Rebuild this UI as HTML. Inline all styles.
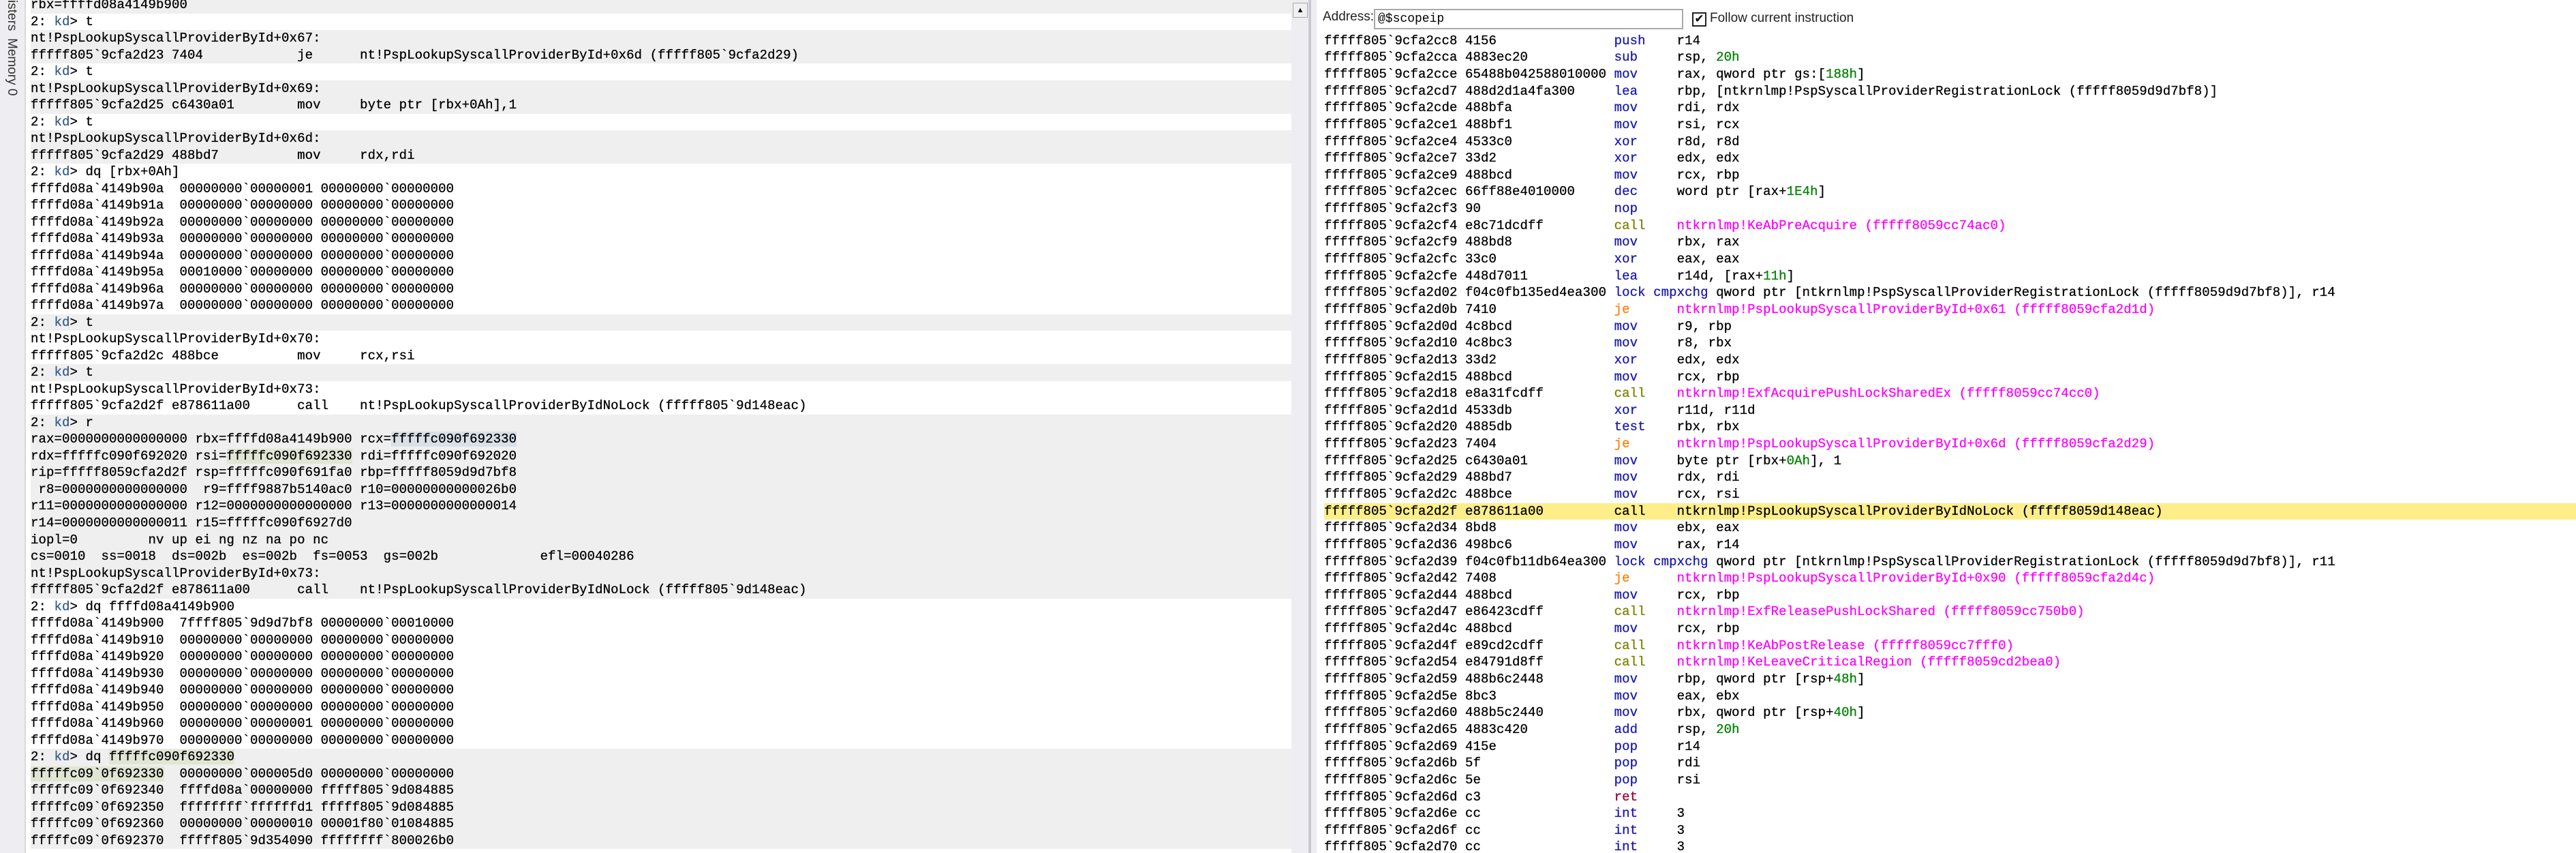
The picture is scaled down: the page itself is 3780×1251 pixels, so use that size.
<!DOCTYPE html>
<html><head><meta charset="utf-8">
<style>
html,body{margin:0;padding:0;width:3780px;height:1251px;overflow:hidden;background:#fff;}
body{position:relative;font-family:"Liberation Mono",monospace;}
#strip{position:absolute;left:0;top:0;width:36px;height:1251px;background:#eeeef2;border-right:2px solid #d8d8de;}
.vt{position:absolute;left:6px;writing-mode:vertical-rl;font-family:"Liberation Sans",sans-serif;font-size:19px;color:#333;}
#left{position:absolute;left:45px;top:-5px;width:1850px;}
.l{height:24.53px;line-height:24.53px;font-size:19px;letter-spacing:0.1px;white-space:pre;color:#000;-webkit-text-stroke:0.3px #000;}
.g{background:#efefef;}
.k{color:#3a5f8a;-webkit-text-stroke:0.3px #3a5f8a;}
.hb{background:#d9e0e8;}
.hg{background:#e1e5d4;}
#sep{position:absolute;left:1895px;top:0;width:25px;height:1251px;background:#eeeef2;}
#sep2{position:absolute;left:1920px;top:0;width:4px;height:1251px;background:#c9c9d2;}
#sep3{position:absolute;left:1924px;top:0;width:8px;height:1251px;background:#eeeef2;}
#sbtn{position:absolute;left:1897px;top:4px;width:20px;height:20px;border:1px solid #a8a8a8;background:#f0f0f0;font-size:11px;line-height:20px;text-align:center;font-family:"Liberation Sans",sans-serif;}
#addr{position:absolute;left:1941px;top:14px;font-family:"Liberation Sans",sans-serif;font-size:19px;color:#222;}
#box{position:absolute;left:2016px;top:13px;width:446px;height:26px;border:2px solid #a9a9a9;font-family:"Liberation Mono",monospace;font-size:18px;line-height:26px;padding-left:4px;box-sizing:content-box;}
#cb{position:absolute;left:2483px;top:18px;width:17px;height:17px;border:2px solid #222;font-size:17px;line-height:17px;text-align:center;font-family:"DejaVu Sans",sans-serif;}
#fl{position:absolute;left:2509px;top:16px;font-family:"Liberation Sans",sans-serif;font-size:19px;color:#222;}
#right{position:absolute;left:1943px;top:47.7px;width:1837px;}
.r{height:24.65px;line-height:24.65px;font-size:19px;letter-spacing:0.1px;white-space:pre;color:#000;-webkit-text-stroke:0.3px currentColor;}
.r span{-webkit-text-stroke:0.3px currentColor;}
.m{color:#1a1ab0;}
.j{color:#ff7f00;}
.c{color:#808000;}
.s{color:#ff00ff;}
.n{color:#008000;}
.rt{color:#a00030;}
.y{background:#fdee8a;}
</style></head><body>
<div id="strip"><div class="vt" style="top:0">isters</div><div class="vt" style="top:56px">Memory 0</div></div>
<div id="left">
<div class="l g">rbx=ffffd08a4149b900</div>
<div class="l">2: <span class="k">kd</span>&gt; t</div>
<div class="l g">nt!PspLookupSyscallProviderById+0x67:</div>
<div class="l g">fffff805`9cfa2d23 7404            je      nt!PspLookupSyscallProviderById+0x6d (fffff805`9cfa2d29)</div>
<div class="l">2: <span class="k">kd</span>&gt; t</div>
<div class="l g">nt!PspLookupSyscallProviderById+0x69:</div>
<div class="l g">fffff805`9cfa2d25 c6430a01        mov     byte ptr [rbx+0Ah],1</div>
<div class="l">2: <span class="k">kd</span>&gt; t</div>
<div class="l g">nt!PspLookupSyscallProviderById+0x6d:</div>
<div class="l g">fffff805`9cfa2d29 488bd7          mov     rdx,rdi</div>
<div class="l">2: <span class="k">kd</span>&gt; dq [rbx+0Ah]</div>
<div class="l">ffffd08a`4149b90a  00000000`00000001 00000000`00000000</div>
<div class="l">ffffd08a`4149b91a  00000000`00000000 00000000`00000000</div>
<div class="l">ffffd08a`4149b92a  00000000`00000000 00000000`00000000</div>
<div class="l">ffffd08a`4149b93a  00000000`00000000 00000000`00000000</div>
<div class="l">ffffd08a`4149b94a  00000000`00000000 00000000`00000000</div>
<div class="l">ffffd08a`4149b95a  00010000`00000000 00000000`00000000</div>
<div class="l">ffffd08a`4149b96a  00000000`00000000 00000000`00000000</div>
<div class="l">ffffd08a`4149b97a  00000000`00000000 00000000`00000000</div>
<div class="l g">2: <span class="k">kd</span>&gt; t</div>
<div class="l">nt!PspLookupSyscallProviderById+0x70:</div>
<div class="l">fffff805`9cfa2d2c 488bce          mov     rcx,rsi</div>
<div class="l g">2: <span class="k">kd</span>&gt; t</div>
<div class="l">nt!PspLookupSyscallProviderById+0x73:</div>
<div class="l">fffff805`9cfa2d2f e878611a00      call    nt!PspLookupSyscallProviderByIdNoLock (fffff805`9d148eac)</div>
<div class="l g">2: <span class="k">kd</span>&gt; r</div>
<div class="l g">rax=0000000000000000 rbx=ffffd08a4149b900 rcx=<span class="hb">fffffc090f692330</span></div>
<div class="l g">rdx=fffffc090f692020 rsi=<span class="hg">fffffc090f692330</span> rdi=fffffc090f692020</div>
<div class="l g">rip=fffff8059cfa2d2f rsp=fffffc090f691fa0 rbp=fffff8059d9d7bf8</div>
<div class="l g"> r8=0000000000000000  r9=ffff9887b5140ac0 r10=00000000000026b0</div>
<div class="l g">r11=0000000000000000 r12=0000000000000000 r13=0000000000000014</div>
<div class="l g">r14=0000000000000011 r15=fffffc090f6927d0</div>
<div class="l g">iopl=0         nv up ei ng nz na po nc</div>
<div class="l g">cs=0010  ss=0018  ds=002b  es=002b  fs=0053  gs=002b             efl=00040286</div>
<div class="l g">nt!PspLookupSyscallProviderById+0x73:</div>
<div class="l g">fffff805`9cfa2d2f e878611a00      call    nt!PspLookupSyscallProviderByIdNoLock (fffff805`9d148eac)</div>
<div class="l">2: <span class="k">kd</span>&gt; dq ffffd08a4149b900</div>
<div class="l">ffffd08a`4149b900  7ffff805`9d9d7bf8 00000000`00010000</div>
<div class="l">ffffd08a`4149b910  00000000`00000000 00000000`00000000</div>
<div class="l">ffffd08a`4149b920  00000000`00000000 00000000`00000000</div>
<div class="l">ffffd08a`4149b930  00000000`00000000 00000000`00000000</div>
<div class="l">ffffd08a`4149b940  00000000`00000000 00000000`00000000</div>
<div class="l">ffffd08a`4149b950  00000000`00000000 00000000`00000000</div>
<div class="l">ffffd08a`4149b960  00000000`00000001 00000000`00000000</div>
<div class="l">ffffd08a`4149b970  00000000`00000000 00000000`00000000</div>
<div class="l g">2: <span class="k">kd</span>&gt; dq <span class="hg">fffffc090f692330</span></div>
<div class="l g"><span class="hg">fffffc09`0f692330</span>  00000000`000005d0 00000000`00000000</div>
<div class="l g">fffffc09`0f692340  ffffd08a`00000000 fffff805`9d084885</div>
<div class="l g">fffffc09`0f692350  ffffffff`ffffffd1 fffff805`9d084885</div>
<div class="l g">fffffc09`0f692360  00000000`00000010 00001f80`01084885</div>
<div class="l g">fffffc09`0f692370  fffff805`9d354090 ffffffff`800026b0</div>
</div>
<div id="sep"></div><div id="sep2"></div><div id="sep3"></div>
<div id="sbtn">&#9650;</div>
<div id="addr">Address:</div>
<div id="box">@$scopeip</div>
<div id="cb">&#10004;</div>
<div id="fl">Follow current instruction</div>
<div id="right">
<div class="r">fffff805`9cfa2cc8 4156               <span class="m">push</span>    r14</div>
<div class="r">fffff805`9cfa2cca 4883ec20           <span class="m">sub</span>     rsp, <span class="n">20h</span></div>
<div class="r">fffff805`9cfa2cce 65488b042588010000 <span class="m">mov</span>     rax, qword ptr gs:[<span class="n">188h</span>]</div>
<div class="r">fffff805`9cfa2cd7 488d2d1a4fa300     <span class="m">lea</span>     rbp, [ntkrnlmp!PspSyscallProviderRegistrationLock (fffff8059d9d7bf8)]</div>
<div class="r">fffff805`9cfa2cde 488bfa             <span class="m">mov</span>     rdi, rdx</div>
<div class="r">fffff805`9cfa2ce1 488bf1             <span class="m">mov</span>     rsi, rcx</div>
<div class="r">fffff805`9cfa2ce4 4533c0             <span class="m">xor</span>     r8d, r8d</div>
<div class="r">fffff805`9cfa2ce7 33d2               <span class="m">xor</span>     edx, edx</div>
<div class="r">fffff805`9cfa2ce9 488bcd             <span class="m">mov</span>     rcx, rbp</div>
<div class="r">fffff805`9cfa2cec 66ff88e4010000     <span class="m">dec</span>     word ptr [rax+<span class="n">1E4h</span>]</div>
<div class="r">fffff805`9cfa2cf3 90                 <span class="m">nop</span></div>
<div class="r">fffff805`9cfa2cf4 e8c71dcdff         <span class="c">call</span>    <span class="s">ntkrnlmp!KeAbPreAcquire (fffff8059cc74ac0)</span></div>
<div class="r">fffff805`9cfa2cf9 488bd8             <span class="m">mov</span>     rbx, rax</div>
<div class="r">fffff805`9cfa2cfc 33c0               <span class="m">xor</span>     eax, eax</div>
<div class="r">fffff805`9cfa2cfe 448d7011           <span class="m">lea</span>     r14d, [rax+<span class="n">11h</span>]</div>
<div class="r">fffff805`9cfa2d02 f04c0fb135ed4ea300 <span class="m">lock cmpxchg</span> qword ptr [ntkrnlmp!PspSyscallProviderRegistrationLock (fffff8059d9d7bf8)], r14</div>
<div class="r">fffff805`9cfa2d0b 7410               <span class="j">je</span>      <span class="s">ntkrnlmp!PspLookupSyscallProviderById+0x61 (fffff8059cfa2d1d)</span></div>
<div class="r">fffff805`9cfa2d0d 4c8bcd             <span class="m">mov</span>     r9, rbp</div>
<div class="r">fffff805`9cfa2d10 4c8bc3             <span class="m">mov</span>     r8, rbx</div>
<div class="r">fffff805`9cfa2d13 33d2               <span class="m">xor</span>     edx, edx</div>
<div class="r">fffff805`9cfa2d15 488bcd             <span class="m">mov</span>     rcx, rbp</div>
<div class="r">fffff805`9cfa2d18 e8a31fcdff         <span class="c">call</span>    <span class="s">ntkrnlmp!ExfAcquirePushLockSharedEx (fffff8059cc74cc0)</span></div>
<div class="r">fffff805`9cfa2d1d 4533db             <span class="m">xor</span>     r11d, r11d</div>
<div class="r">fffff805`9cfa2d20 4885db             <span class="m">test</span>    rbx, rbx</div>
<div class="r">fffff805`9cfa2d23 7404               <span class="j">je</span>      <span class="s">ntkrnlmp!PspLookupSyscallProviderById+0x6d (fffff8059cfa2d29)</span></div>
<div class="r">fffff805`9cfa2d25 c6430a01           <span class="m">mov</span>     byte ptr [rbx+<span class="n">0Ah</span>], 1</div>
<div class="r">fffff805`9cfa2d29 488bd7             <span class="m">mov</span>     rdx, rdi</div>
<div class="r">fffff805`9cfa2d2c 488bce             <span class="m">mov</span>     rcx, rsi</div>
<div class="r y">fffff805`9cfa2d2f e878611a00         call    ntkrnlmp!PspLookupSyscallProviderByIdNoLock (fffff8059d148eac)</div>
<div class="r">fffff805`9cfa2d34 8bd8               <span class="m">mov</span>     ebx, eax</div>
<div class="r">fffff805`9cfa2d36 498bc6             <span class="m">mov</span>     rax, r14</div>
<div class="r">fffff805`9cfa2d39 f04c0fb11db64ea300 <span class="m">lock cmpxchg</span> qword ptr [ntkrnlmp!PspSyscallProviderRegistrationLock (fffff8059d9d7bf8)], r11</div>
<div class="r">fffff805`9cfa2d42 7408               <span class="j">je</span>      <span class="s">ntkrnlmp!PspLookupSyscallProviderById+0x90 (fffff8059cfa2d4c)</span></div>
<div class="r">fffff805`9cfa2d44 488bcd             <span class="m">mov</span>     rcx, rbp</div>
<div class="r">fffff805`9cfa2d47 e86423cdff         <span class="c">call</span>    <span class="s">ntkrnlmp!ExfReleasePushLockShared (fffff8059cc750b0)</span></div>
<div class="r">fffff805`9cfa2d4c 488bcd             <span class="m">mov</span>     rcx, rbp</div>
<div class="r">fffff805`9cfa2d4f e89cd2cdff         <span class="c">call</span>    <span class="s">ntkrnlmp!KeAbPostRelease (fffff8059cc7fff0)</span></div>
<div class="r">fffff805`9cfa2d54 e84791d8ff         <span class="c">call</span>    <span class="s">ntkrnlmp!KeLeaveCriticalRegion (fffff8059cd2bea0)</span></div>
<div class="r">fffff805`9cfa2d59 488b6c2448         <span class="m">mov</span>     rbp, qword ptr [rsp+<span class="n">48h</span>]</div>
<div class="r">fffff805`9cfa2d5e 8bc3               <span class="m">mov</span>     eax, ebx</div>
<div class="r">fffff805`9cfa2d60 488b5c2440         <span class="m">mov</span>     rbx, qword ptr [rsp+<span class="n">40h</span>]</div>
<div class="r">fffff805`9cfa2d65 4883c420           <span class="m">add</span>     rsp, <span class="n">20h</span></div>
<div class="r">fffff805`9cfa2d69 415e               <span class="m">pop</span>     r14</div>
<div class="r">fffff805`9cfa2d6b 5f                 <span class="m">pop</span>     rdi</div>
<div class="r">fffff805`9cfa2d6c 5e                 <span class="m">pop</span>     rsi</div>
<div class="r">fffff805`9cfa2d6d c3                 <span class="rt">ret</span></div>
<div class="r">fffff805`9cfa2d6e cc                 <span class="m">int</span>     3</div>
<div class="r">fffff805`9cfa2d6f cc                 <span class="m">int</span>     3</div>
<div class="r">fffff805`9cfa2d70 cc                 <span class="m">int</span>     3</div>
</div>
</body></html>
